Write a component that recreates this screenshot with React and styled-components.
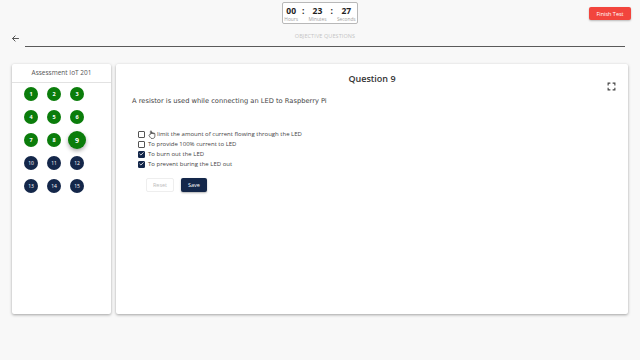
import React, { useState } from "react";
import styled, { createGlobalStyle } from "styled-components";

const GlobalStyle = createGlobalStyle`
  body {
    margin: 0;
    background: #f8f8f8;
    font-family: "Open Sans", "Liberation Sans", sans-serif;
  }
`;

const questions = [1, 2, 3, 4, 5, 6, 7, 8, 9, 10, 11, 12, 13, 14, 15];
const answered = 9;
const current = 9;

const options = [
  { text: "limit the amount of current flowing through the LED", checked: false, pointer: true },
  { text: "To provide 100% current to LED", checked: false },
  { text: "To burn out the LED", checked: true },
  { text: "To prevent buring the LED out", checked: true },
];

export default function App() {
  const [picked, setPicked] = useState(options.map((o) => o.checked));

  return (
    <Page>
      <GlobalStyle />
      <TopBar>
        <Timer>
          <TimeUnit>
            <Digits>00</Digits>
            <UnitLabel>Hours</UnitLabel>
          </TimeUnit>
          <Colon>:</Colon>
          <TimeUnit>
            <Digits>23</Digits>
            <UnitLabel>Minutes</UnitLabel>
          </TimeUnit>
          <Colon>:</Colon>
          <TimeUnit>
            <Digits>27</Digits>
            <UnitLabel>Seconds</UnitLabel>
          </TimeUnit>
        </Timer>
        <FinishButton>Finish Test</FinishButton>
      </TopBar>

      <NavRow>
        <BackButton>
          <svg width="9" height="9" viewBox="0 0 24 24" fill="none" stroke="#444" strokeWidth="2.4" strokeLinecap="round" strokeLinejoin="round">
            <path d="M20 12H5" />
            <path d="M11 5l-7 7 7 7" />
          </svg>
        </BackButton>
        <SectionTitle>OBJECTIVE QUESTIONS</SectionTitle>
      </NavRow>

      <Content>
        <SidePanel>
          <SideTitle>Assessment IoT 201</SideTitle>
          <QuestionGrid>
            {questions.map((n) => (
              <Bubble key={n} $done={n <= answered} $active={n === current}>
                {n}
              </Bubble>
            ))}
          </QuestionGrid>
        </SidePanel>

        <MainPanel>
          <QuestionHeader>
            <QuestionTitle>Question 9</QuestionTitle>
            <FullscreenIcon>
              <svg width="9" height="9" viewBox="0 0 24 24" fill="none" stroke="#444" strokeWidth="3">
                <path d="M3 9V3h6" />
                <path d="M15 3h6v6" />
                <path d="M21 15v6h-6" />
                <path d="M9 21H3v-6" />
              </svg>
            </FullscreenIcon>
          </QuestionHeader>
          <QuestionText>A resistor is used while connecting an LED to Raspberry Pi</QuestionText>

          <OptionList>
            {options.map((o, i) => (
              <OptionRow key={o.text} onClick={() => setPicked(picked.map((p, j) => (j === i ? !p : p)))}>
                <CheckBox $checked={picked[i]}>
                  {picked[i] && (
                    <svg width="6" height="6" viewBox="0 0 24 24" fill="none" stroke="#fff" strokeWidth="4" strokeLinecap="round" strokeLinejoin="round">
                      <path d="M4 12l5 5L20 6" />
                    </svg>
                  )}
                </CheckBox>
                {o.pointer && (
                  <PointerIcon>
                    <svg width="8" height="9" viewBox="0 0 20 22" fill="#fff" stroke="#222" strokeWidth="1.6" strokeLinejoin="round">
                      <path d="M6 11V3.2a1.4 1.4 0 0 1 2.8 0V9V7.4a1.4 1.4 0 0 1 2.8 0V9.2V8.2a1.4 1.4 0 0 1 2.8 0V10V9.4a1.4 1.4 0 0 1 2.8 0V15c0 3.5-2.4 6-5.6 6H10c-2 0-3.2-1-4.3-2.6L2.6 13.6a1.4 1.4 0 0 1 2.2-1.7Z" />
                    </svg>
                  </PointerIcon>
                )}
                <OptionText>{o.text}</OptionText>
              </OptionRow>
            ))}
          </OptionList>

          <ButtonRow>
            <ResetButton>Reset</ResetButton>
            <SaveButton>Save</SaveButton>
          </ButtonRow>
        </MainPanel>
      </Content>
    </Page>
  );
}

const Page = styled.div`
  width: 640px;
  height: 360px;
  overflow: hidden;
  background: #f8f8f8;
`;

const TopBar = styled.div`
  position: relative;
  height: 27px;
  display: flex;
  justify-content: center;
  align-items: flex-start;
  padding-top: 2px;
  box-sizing: border-box;
`;

const Timer = styled.div`
  width: 76px;
  height: 22px;
  box-sizing: border-box;
  border: 1px solid #b8b8b8;
  border-radius: 2px;
  background: #fff;
  display: flex;
  justify-content: center;
  align-items: flex-start;
  gap: 2px;
  padding-top: 2px;
`;

const TimeUnit = styled.div`
  display: flex;
  flex-direction: column;
  align-items: center;
`;

const Digits = styled.span`
  font-size: 8.5px;
  font-weight: 700;
  line-height: 11px;
  color: #222;
`;

const Colon = styled.span`
  font-size: 8.5px;
  font-weight: 700;
  line-height: 11px;
  color: #222;
  padding: 0 2px;
`;

const UnitLabel = styled.span`
  font-size: 4.8px;
  line-height: 6px;
  color: #a0a0a0;
`;

const FinishButton = styled.button`
  position: absolute;
  right: 9px;
  top: 7px;
  width: 42px;
  height: 13px;
  padding: 0;
  border: none;
  border-radius: 2px;
  background: #f2453d;
  color: #fff;
  font-family: "Open Sans", "Liberation Sans", sans-serif;
  font-size: 5.5px;
  box-shadow: 0 1px 2px rgba(0, 0, 0, 0.25);
`;

const NavRow = styled.div`
  display: flex;
  align-items: flex-end;
  height: 20px;
  padding: 0 15px 0 11px;
`;

const BackButton = styled.div`
  width: 14px;
  height: 17px;
  display: flex;
  align-items: center;
`;

const SectionTitle = styled.div`
  flex: 1;
  height: 19px;
  box-sizing: border-box;
  border-bottom: 1.5px solid #5a5a5a;
  text-align: center;
  font-size: 5.5px;
  line-height: 10px;
  padding-top: 3px;
  color: #c4c4c4;
  letter-spacing: 0.1px;
`;

const Content = styled.div`
  display: flex;
  gap: 5px;
  padding: 17px 12px 0 12px;
`;

const Card = styled.div`
  background: #fff;
  height: 250px;
  box-shadow: 0 1px 3px rgba(0, 0, 0, 0.35);
  border-radius: 2px;
`;

const SidePanel = styled(Card)`
  width: 99px;
  flex-shrink: 0;
`;

const SideTitle = styled.div`
  height: 18px;
  border-bottom: 1px solid #e2e2e2;
  text-align: center;
  font-size: 6.5px;
  line-height: 18px;
  color: #555;
`;

const QuestionGrid = styled.div`
  display: grid;
  grid-template-columns: repeat(3, 14px);
  grid-auto-rows: 14px;
  column-gap: 9px;
  row-gap: 9px;
  padding: 4px 0 0 12px;
`;

const Bubble = styled.div`
  width: 14px;
  height: 14px;
  border-radius: 50%;
  display: flex;
  align-items: center;
  justify-content: center;
  justify-self: center;
  align-self: center;
  font-size: ${(p) => (p.$done ? "5.5px" : "5px")};
  font-weight: ${(p) => (p.$done ? 700 : 400)};
  color: #fff;
  background: ${(p) => (p.$done ? "#0b7d0b" : "#14274a")};
  ${(p) =>
    p.$active &&
    `
    width: 18px;
    height: 18px;
    font-size: 7px;
    box-shadow: 0 2px 4px rgba(0, 0, 0, 0.35);
  `}
`;

const MainPanel = styled(Card)`
  flex: 1;
  padding: 0 16px;
  box-sizing: border-box;
`;

const QuestionHeader = styled.div`
  position: relative;
  height: 28px;
  display: flex;
  justify-content: center;
  align-items: center;
`;

const QuestionTitle = styled.div`
  font-size: 9px;
  font-weight: 600;
  color: #333;
`;

const FullscreenIcon = styled.div`
  position: absolute;
  right: -4px;
  top: 10px;
  width: 9px;
  height: 9px;
`;

const QuestionText = styled.div`
  font-family: "DejaVu Sans", Verdana, sans-serif;
  font-size: 6.7px;
  color: #444;
  line-height: 10px;
  margin-top: 4px;
`;

const OptionList = styled.div`
  display: flex;
  flex-direction: column;
  padding: 23px 0 0 6px;
`;

const OptionRow = styled.div`
  display: flex;
  align-items: center;
  height: 10px;
  gap: 3px;
  cursor: pointer;
`;

const CheckBox = styled.div`
  width: 7px;
  height: 7px;
  box-sizing: border-box;
  border: 1px solid ${(p) => (p.$checked ? "#14274a" : "#555")};
  border-radius: 1px;
  background: ${(p) => (p.$checked ? "#14274a" : "#fff")};
  display: flex;
  align-items: center;
  justify-content: center;
`;

const PointerIcon = styled.div`
  width: 8px;
  height: 9px;
  display: flex;
  margin-right: -2px;
`;

const OptionText = styled.span`
  font-size: 6px;
  color: #444;
`;

const ButtonRow = styled.div`
  display: flex;
  gap: 7px;
  padding: 9px 0 0 14px;
`;

const BaseButton = styled.button`
  height: 14px;
  padding: 0;
  border-radius: 2px;
  font-family: "Open Sans", "Liberation Sans", sans-serif;
  font-size: 5.5px;
`;

const ResetButton = styled(BaseButton)`
  width: 28px;
  background: #fff;
  border: 1px solid #eee;
  color: #bbb;
`;

const SaveButton = styled(BaseButton)`
  width: 26px;
  background: #14274a;
  border: none;
  color: #fff;
  box-shadow: 0 1px 2px rgba(0, 0, 0, 0.3);
`;
